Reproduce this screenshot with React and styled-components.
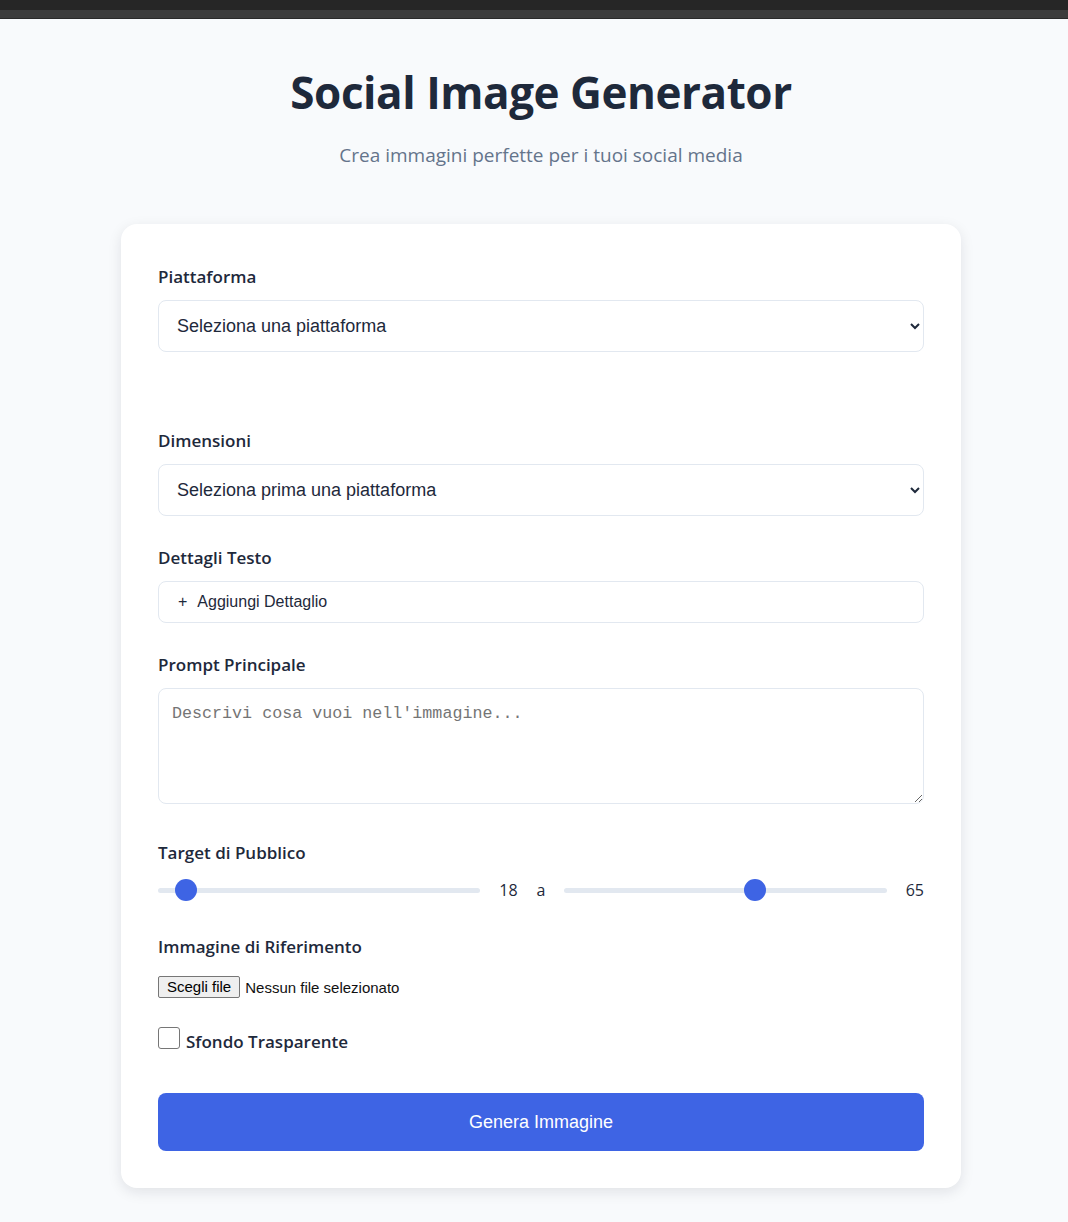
import React, { useState } from "react";
import styled, { createGlobalStyle } from "styled-components";

const GlobalStyle = createGlobalStyle`
  html, body { margin: 0; padding: 0; background: #f8fafc; }
  body { font-family: "Open Sans", "Noto Sans", sans-serif; color: #1e293b; }
  * { box-sizing: border-box; }
`;

const TopBar = styled.div`
  height: 19px;
  background: linear-gradient(#262626 0 10px, #3c3c3c 10px 18px, #2a2a2a 18px 19px);
`;

const Page = styled.div`
  padding: 0 0 34px 14px;
`;

const Container = styled.main`
  width: 840px;
  margin: 0 auto;
`;

const Header = styled.header`
  text-align: center;
  padding-top: 43px;
  margin-bottom: 56px;
`;

const Title = styled.h1`
  margin: 0;
  font-size: 44px;
  font-weight: 700;
  line-height: 60px;
  color: #1e293b;
  letter-spacing: -0.45px;
`;

const Subtitle = styled.p`
  margin: 20px 0 0;
  font-size: 19px;
  line-height: 26px;
  color: #64748b;
`;

const Card = styled.section`
  background: #ffffff;
  border-radius: 16px;
  box-shadow: 0 4px 14px rgba(15, 23, 42, 0.1);
  padding: 41px 37px 37px;
`;

const Group = styled.div`
  margin-bottom: ${(p) => p.$mb ?? 30}px;
`;

const Label = styled.label`
  display: block;
  font-size: 17px;
  font-weight: 600;
  line-height: 24px;
  color: #1e293b;
  margin-bottom: 11px;
`;

const Select = styled.select`
  display: block;
  width: 100%;
  height: 52px;
  padding: 0 10px 0 14px;
  font-family: "Liberation Sans", Arial, sans-serif;
  font-size: 18px;
  color: #1e293b;
  background: #fff;
  border: 1px solid #e2e8f0;
  border-radius: 8px;
  outline: none;
`;

const AddButton = styled.button`
  display: flex;
  align-items: center;
  gap: 10px;
  width: 100%;
  height: 42px;
  padding: 0 19px;
  font-family: "Liberation Sans", Arial, sans-serif;
  font-size: 16px;
  color: #1e293b;
  background: #fff;
  border: 1px solid #e2e8f0;
  border-radius: 8px;
  text-align: left;
  cursor: pointer;
`;

const TextArea = styled.textarea`
  display: block;
  width: 100%;
  height: 116px;
  padding: 13px 13px;
  font-family: "Liberation Mono", "DejaVu Sans Mono", monospace;
  font-size: 16.7px;
  line-height: 24px;
  color: #1e293b;
  border: 1px solid #e2e8f0;
  border-radius: 8px;
  resize: vertical;
  outline: none;
  &::placeholder { color: #757575; }
`;

const RangeRow = styled.div`
  display: flex;
  align-items: center;
  gap: 19px;
  height: 28px;
`;

const Range = styled.input`
  flex: 1;
  min-width: 0;
  margin: 0;
  height: 22px;
  -webkit-appearance: none;
  appearance: none;
  background: transparent;
  &::-webkit-slider-runnable-track {
    height: 5px;
    background: #e2e8f0;
    border-radius: 3px;
  }
  &::-webkit-slider-thumb {
    -webkit-appearance: none;
    width: 22px;
    height: 22px;
    margin-top: -8.5px;
    border-radius: 50%;
    background: #3e64e4;
    border: none;
  }
`;

const RangeText = styled.span`
  font-size: 16px;
  color: #1e293b;
  line-height: 22px;
`;

const FileRow = styled.label`
  display: flex;
  align-items: center;
  gap: 5px;
  margin-top: 17px;
  font-family: "Liberation Sans", Arial, sans-serif;
  font-size: 15px;
  color: #111;
  cursor: pointer;
`;

const HiddenInput = styled.input`
  display: none;
`;

const FakeFileButton = styled.span`
  display: inline-block;
  height: 22px;
  line-height: 20px;
  padding: 0 8px;
  background: #efefef;
  border: 1px solid #767676;
  border-radius: 2px;
  color: #000;
`;

const CheckRow = styled.label`
  display: flex;
  align-items: flex-end;
  gap: 6px;
  font-size: 17px;
  font-weight: 600;
  line-height: 24px;
  color: #1e293b;
  margin-bottom: 39px;
  cursor: pointer;
`;

const Check = styled.input`
  -webkit-appearance: none;
  appearance: none;
  width: 22px;
  height: 22px;
  margin: 0 0 5px;
  border: 1px solid #767676;
  border-radius: 3px;
  background: #fff;
  &:checked { background: #3e64e4; border-color: #3e64e4; }
`;

const Submit = styled.button`
  display: block;
  width: 100%;
  height: 58px;
  border: none;
  border-radius: 8px;
  background: #3e64e4;
  color: #fff;
  font-family: "Liberation Sans", Arial, sans-serif;
  font-size: 18px;
  cursor: pointer;
`;

export default function App() {
  const [minAge, setMinAge] = useState(18);
  const [maxAge, setMaxAge] = useState(65);
  return (
    <>
      <GlobalStyle />
      <TopBar />
      <Page>
        <Container>
          <Header>
            <Title>Social Image Generator</Title>
            <Subtitle>Crea immagini perfette per i tuoi social media</Subtitle>
          </Header>
          <Card>
            <Group $mb={77}>
              <Label htmlFor="platform">Piattaforma</Label>
              <Select id="platform" defaultValue="">
                <option value="">Seleziona una piattaforma</option>
                <option value="instagram">Instagram</option>
                <option value="facebook">Facebook</option>
                <option value="linkedin">LinkedIn</option>
              </Select>
            </Group>
            <Group>
              <Label htmlFor="size">Dimensioni</Label>
              <Select id="size" defaultValue="">
                <option value="">Seleziona prima una piattaforma</option>
              </Select>
            </Group>
            <Group>
              <Label>Dettagli Testo</Label>
              <AddButton type="button">
                <span>+</span>
                <span>Aggiungi Dettaglio</span>
              </AddButton>
            </Group>
            <Group $mb={37}>
              <Label htmlFor="prompt">Prompt Principale</Label>
              <TextArea id="prompt" placeholder="Descrivi cosa vuoi nell'immagine..." />
            </Group>
            <Group $mb={31}>
              <Label>Target di Pubblico</Label>
              <RangeRow>
                <Range type="range" min={13} max={100} value={minAge} onChange={(e) => setMinAge(+e.target.value)} />
                <RangeText>{minAge}</RangeText>
                <RangeText>a</RangeText>
                <Range type="range" min={13} max={100} value={maxAge} onChange={(e) => setMaxAge(+e.target.value)} />
                <RangeText>{maxAge}</RangeText>
              </RangeRow>
            </Group>
            <Group $mb={29}>
              <Label as="div">Immagine di Riferimento</Label>
              <FileRow>
                <HiddenInput type="file" accept="image/*" />
                <FakeFileButton>Scegli file</FakeFileButton>
                <span>Nessun file selezionato</span>
              </FileRow>
            </Group>
            <CheckRow>
              <Check type="checkbox" />
              <span>Sfondo Trasparente</span>
            </CheckRow>
            <Submit type="button">Genera Immagine</Submit>
          </Card>
        </Container>
      </Page>
    </>
  );
}
